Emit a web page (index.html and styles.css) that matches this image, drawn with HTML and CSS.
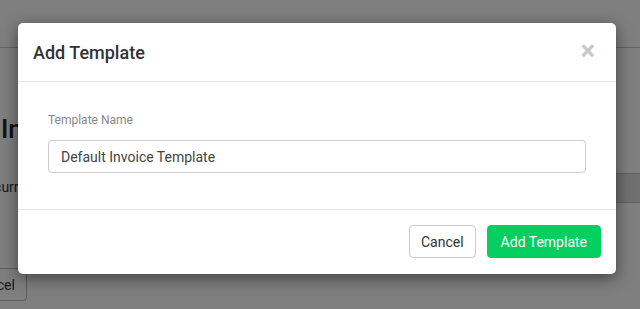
FILE: index.html
```html
<!DOCTYPE html>
<html lang="en">
<head>
  <meta charset="UTF-8">
  <meta name="viewport" content="width=device-width, initial-scale=1.0">
  <title>Add Template</title>
  <link rel="stylesheet" href="styles.css">
</head>
<body>
  <!-- page behind the modal -->
  <div class="page">
    <div class="page-header"></div>
    <h1 class="page-title">Invoice Templates</h1>
    <div class="page-row">
      <p class="page-text">Recurring invoices</p>
      <div class="page-band"></div>
    </div>
    <button class="page-btn">Cancel</button>
  </div>

  <div class="backdrop"></div>

  <div class="modal">
    <div class="modal-header">
      <h2>Add Template</h2>
      <span class="close">&times;</span>
    </div>
    <div class="modal-body">
      <label for="template-name">Template Name</label>
      <input type="text" id="template-name" value="Default Invoice Template">
    </div>
    <div class="modal-footer">
      <button class="btn btn-cancel">Cancel</button>
      <button class="btn btn-add">Add Template</button>
    </div>
  </div>
</body>
</html>
```

FILE: styles.css
```css
body {
  margin: 0;
  font-family: 'Roboto', sans-serif;
  background-color: #fff;
  width: 640px;
  height: 309px;
  overflow: hidden;
  position: relative;
}

/* Page underneath */
.page {
  height: 309px;
  display: flex;
  flex-direction: column;
}

.page-header {
  height: 47px;
  border-bottom: 1px solid #c8c8c8;
  flex-shrink: 0;
}

.page-title {
  margin: 66px 0 0 1px;
  font-size: 26px;
  font-weight: 500;
  color: #222;
  line-height: 30px;
  white-space: nowrap;
}

.page-row {
  margin-top: 29px;
  height: 30px;
  display: flex;
  align-items: flex-start;
}

.page-text {
  margin: 5px 0 0 -22px;
  font-size: 14px;
  color: #333;
  line-height: 18px;
  white-space: nowrap;
  width: 40px;
}

.page-band {
  flex: 1;
  height: 28px;
  border-top: 1px solid #c8c8c8;
  border-bottom: 1px solid #c8c8c8;
  background-color: #e0e0e0;
}

.page-btn {
  margin: 65px 0 0 -40px;
  width: 67px;
  height: 33px;
  border: 1px solid #bbb;
  border-radius: 4px;
  background: #fff;
  font-family: 'Roboto', sans-serif;
  font-size: 14px;
  color: #333;
}

.backdrop {
  position: absolute;
  inset: 0;
  background-color: rgba(0, 0, 0, 0.5);
}

/* Modal */
.modal {
  position: absolute;
  left: 18px;
  top: 23px;
  width: 598px;
  background-color: #fff;
  border-radius: 5px;
  box-shadow: 0 4px 16px rgba(0, 0, 0, 0.5);
}

.modal-header {
  height: 58px;
  padding: 0 21px 0 15px;
  display: flex;
  align-items: center;
  justify-content: space-between;
  border-bottom: 1px solid #e5e5e5;
}

.modal-header h2 {
  margin: 0;
  font-size: 18px;
  font-weight: 500;
  color: #333;
}

.close {
  font-size: 27px;
  font-weight: 700;
  color: #c8c8c8;
  line-height: 1;
  margin-top: -2px;
}

.modal-body {
  padding: 30px 30px 36px;
}

.modal-body label {
  display: block;
  font-size: 12px;
  color: #888;
  line-height: 16px;
  margin-bottom: 12px;
}

.modal-body input {
  display: block;
  width: 100%;
  box-sizing: border-box;
  height: 33px;
  padding: 0 12px;
  border: 1px solid #ccc;
  border-radius: 4px;
  font-family: 'Roboto', sans-serif;
  font-size: 14px;
  color: #444;
}

.modal-footer {
  border-top: 1px solid #e5e5e5;
  padding: 15px 15px 16px;
  display: flex;
  justify-content: flex-end;
  gap: 11px;
}

.btn {
  height: 33px;
  padding: 0 11px;
  border-radius: 4px;
  font-family: 'Roboto', sans-serif;
  font-size: 14px;
}

.btn-cancel {
  background-color: #fff;
  border: 1px solid #ccc;
  color: #333;
}

.btn-add {
  padding: 0 13px;
  background-color: #06cf62;
  border: 1px solid #06cf62;
  color: #fff;
}
```
